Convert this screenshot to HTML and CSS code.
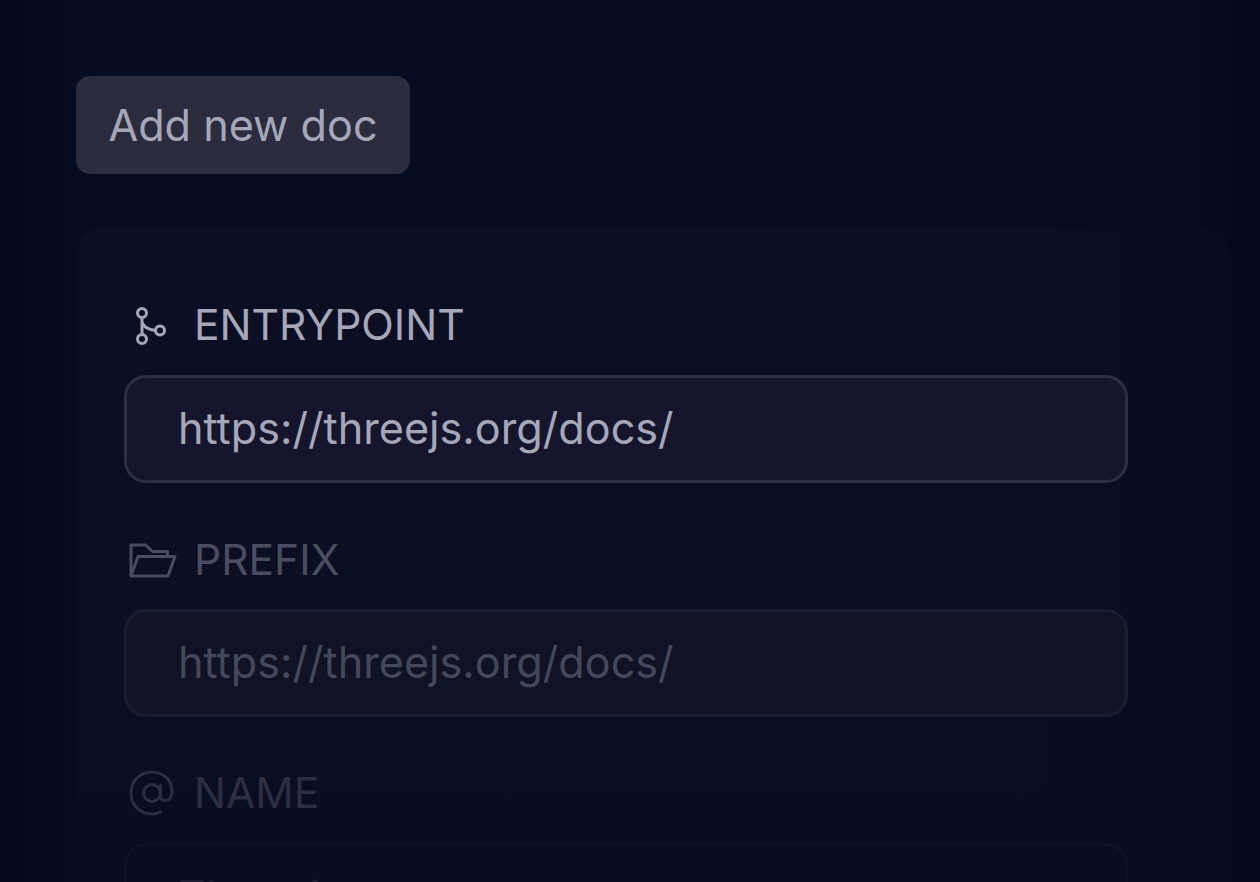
FILE: index.html
```html
<!DOCTYPE html>
<html lang="en">
<head>
<meta charset="utf-8">
<title>Add new doc</title>
<link rel="stylesheet" href="styles.css">
</head>
<body>
<main class="page">
  <button class="add-btn" type="button">Add new doc</button>
  <form class="card">
    <div class="field">
      <label class="field-label">
        <svg class="icon" viewBox="0 0 48 48" fill="none" stroke="currentColor" stroke-width="3"><circle cx="13" cy="12" r="4.500"/><circle cx="13" cy="38" r="4.500"/><circle cx="31" cy="29.500" r="4.500"/><path d="M13 16.500V33.500M13 21c1 5 7 7.500 13.500 8.500"/></svg>
        <span>ENTRYPOINT</span>
      </label>
      <div class="input">https://threejs.org/docs/</div>
    </div>
    <div class="field field-mid">
      <label class="field-label">
        <svg class="icon" viewBox="0 0 48 48" fill="none" stroke="currentColor" stroke-width="3" stroke-linejoin="round"><path d="M2 40V9H16.500l7 6.500h15v5"/><path d="M2 40L9 20.500H46L39 40z"/></svg>
        <span>PREFIX</span>
      </label>
      <div class="input">https://threejs.org/docs/</div>
    </div>
    <div class="field field-low">
      <label class="field-label">
        <svg class="icon" viewBox="0 0 48 48" fill="none" stroke="currentColor" stroke-width="3"><circle cx="23" cy="24" r="8.500"/><path d="M31.500 15.500v12c0 6 10 6 11.500-3C44 11 34 3 23 3 11 3 2 12 2 24s9 21 21 21c4 0 7-1 9.500-2.500"/></svg>
        <span>NAME</span>
      </label>
      <div class="input">Three.js</div>
    </div>
  </form>
</main>
</body>
</html>
```
FILE: styles.css
```css
* { box-sizing: border-box; }
html, body { margin: 0; height: 100%; }
body {
  background: linear-gradient(90deg, #040a1c 0%, #060c21 6%, #060c21 94%, #040a1c 100%);
  font-family: Inter, "Liberation Sans", sans-serif;
  overflow: hidden;
}
.page {
  height: 882px;
  overflow: hidden;
  padding: 76px 30px 0 76px;
  display: flex;
  flex-direction: column;
  align-items: flex-start;
}
.add-btn {
  width: 334px;
  height: 98px;
  border: 0;
  border-radius: 14px;
  background: #2b2c3d;
  color: #a6a8b8;
  font: 400 43.200px/48px Inter, "Liberation Sans", sans-serif;
  padding: 0;
  flex: none;
}
.card {
  margin-top: 53px;
  align-self: stretch;
  flex: none;
  height: 700px;
  padding: 71px 48px 0;
  border-radius: 28px;
  background:
    linear-gradient(180deg, rgba(7, 12, 33, 0) 0%, rgba(7, 12, 33, 0) 55%, rgba(7, 12, 33, 0.9) 100%),
    linear-gradient(90deg, #0b0f23 0%, #0b0f23 80%, #070c21 100%);
  display: flex;
  flex-direction: column;
  gap: 49px;
}
.field { display: flex; flex-direction: column; width: 1004px; }
.field-label {
  display: flex;
  align-items: center;
  gap: 17px;
  height: 54px;
  color: #a6a8b8;
  font-size: 42.500px;
  line-height: 54px;
}
.icon { width: 48px; height: 48px; flex: none; margin-left: 5px; }
.input {
  height: 108px;
  margin-top: 23px;
  border: 3px solid #2c2f45;
  border-radius: 22px;
  background: #15162e;
  color: #a6a8b8;
  font-size: 43.200px;
  line-height: 100px;
  padding-left: 51px;
}
.field-mid { margin-top: 1px; }
.field-mid .field-label { color: #4a4d60; }
.field-mid .input { margin-top: 22px; border-color: #191d30; background: #0f1325; color: #45485b; }
.field-low .field-label { color: #2c2f42; }
.field-low .input { border-color: #0e1228; background: #090d22; color: #1a1d33; }
```
